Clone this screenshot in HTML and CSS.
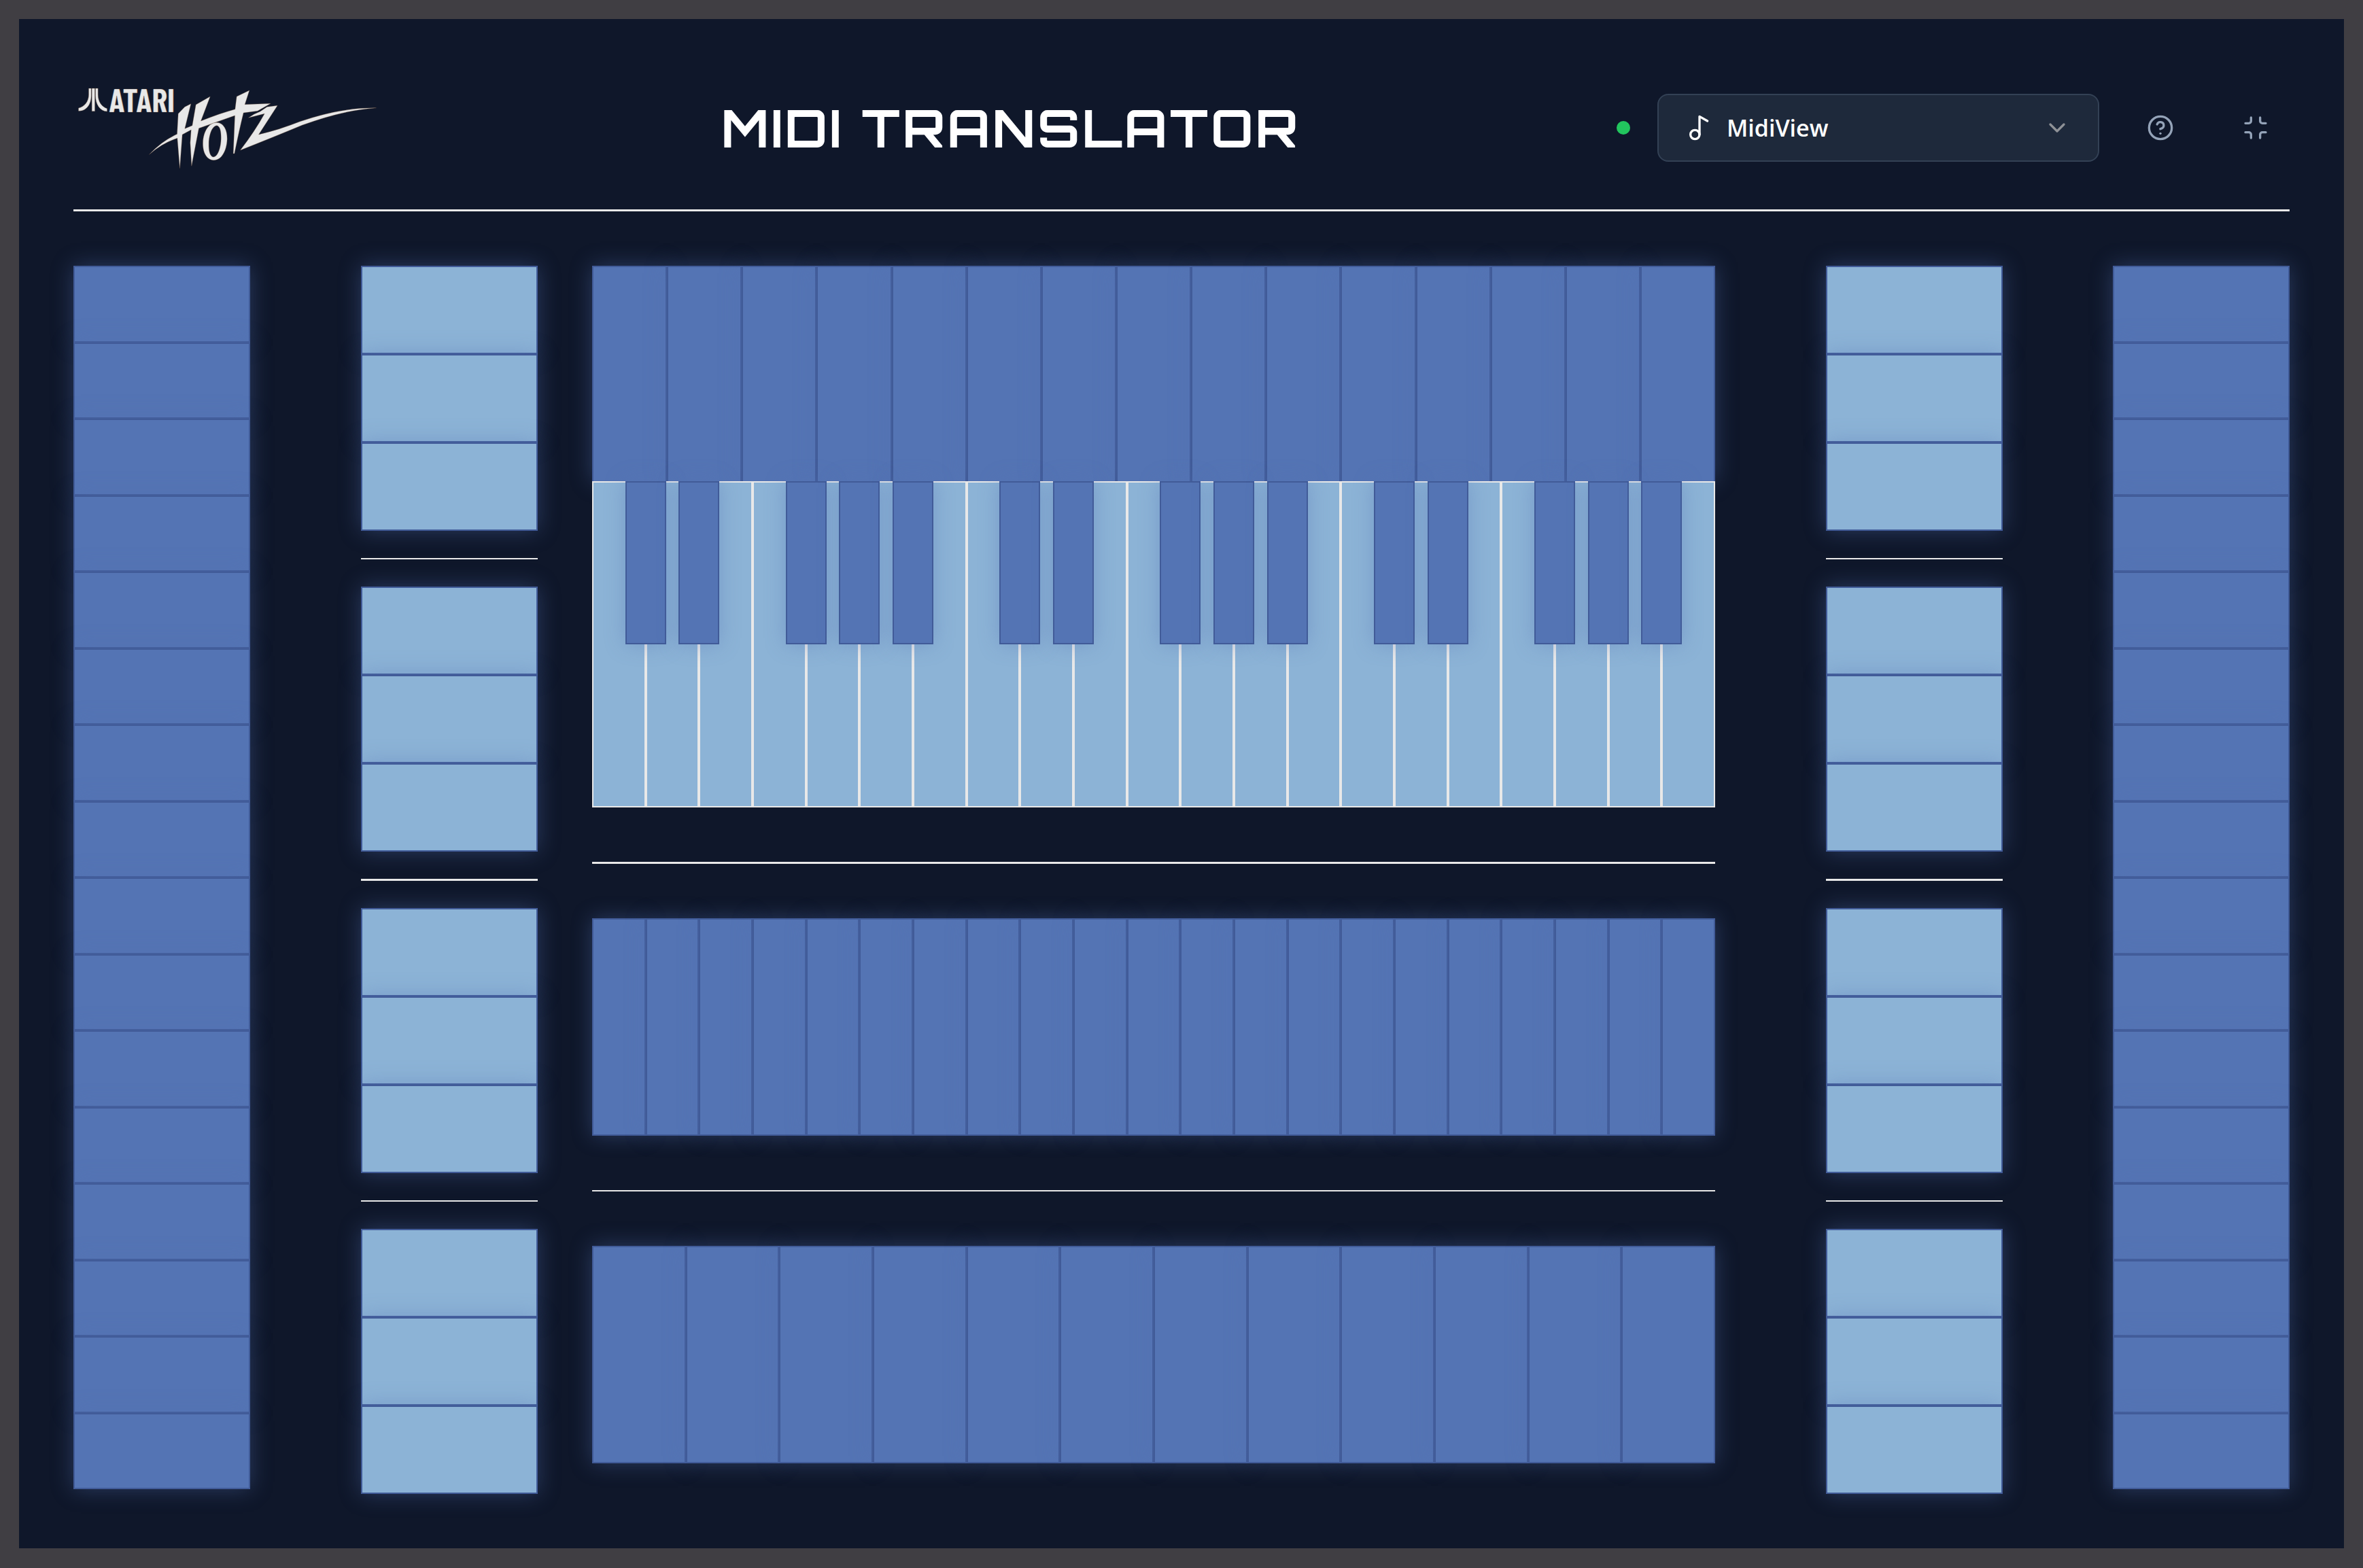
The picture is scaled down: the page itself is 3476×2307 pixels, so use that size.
FILE: index.html
```html
<!DOCTYPE html>
<html lang="en">
<head>
<meta charset="utf-8">
<meta name="viewport" content="width=device-width, initial-scale=1">
<title>MIDI Translator</title>
<link rel="stylesheet" href="styles.css">
</head>
<body>
<main class="panel">
  <header class="header">
    <svg class="logo" viewBox="54 -6 1455 480" role="img" aria-label="Atari Hotz">
      <g class="logo-ink">
        <path d="M131 60H144V161H131Z"/>
        <path d="M117 60H128V92C128 130 108 160 72 160V147C98 142 117 118 117 88Z"/>
        <path d="M158 60H147V92C147 130 166 160 198 162V149C174 142 158 118 158 88Z"/>
        <text class="logo-text" x="206" y="166">ATARI</text>
        <path d="M568 128L541 142L512 172L507 262Q440 292 384 352Q440 302 508 280L519 413L530 264L569 243L565 300L571 403L577 370L603 236L762 180L755 348H760Q782 240 800 168L862 160L920 127L806 131L826 69L770 96L763 152Q690 172 612 204L653 96L590 132L574 224L541 238Z"/>
        <path d="M822 190Q846 172 874 162L904 142L950 136L867 264Q960 242 1050 206Q1230 144 1386 146Q1240 156 1060 222Q930 276 786 333Q850 250 893 172Z"/>
        <path fill-rule="evenodd" d="M682 211C712 212 729 244 728 284C726 335 703 378 668 377C636 376 619 340 621 297C624 248 648 211 682 211ZM682 224C662 226 648 262 647 304C646 338 653 362 667 363C687 362 701 320 701 278C701 248 696 226 682 224Z"/>
      </g>
    </svg>

    <h1 class="title">MIDI TRANSLATOR</h1>

    <div class="controls">
      <span class="status" role="status" aria-label="Connected"></span>
      <div class="picker">
        <svg class="icon picker-note" viewBox="0 0 24 24" aria-hidden="true"><circle cx="8" cy="18" r="4"/><path d="M12 18V2l7 4"/></svg>
        <select class="picker-select" aria-label="MIDI output"><option>MidiView</option></select>
        <svg class="icon picker-arrow" viewBox="0 0 24 24" aria-hidden="true"><path d="m6 9 6 6 6-6"/></svg>
      </div>
      <button class="icon-button" type="button" aria-label="Help">
        <svg class="icon" viewBox="0 0 24 24" aria-hidden="true"><circle cx="12" cy="12" r="10"/><path d="M9.09 9a3 3 0 0 1 5.83 1c0 2-3 3-3 3"/><path d="M12 17h.01"/></svg>
      </button>
      <button class="icon-button" type="button" aria-label="Exit full screen">
        <svg class="icon" viewBox="0 0 24 24" aria-hidden="true"><path d="M8 3v3a2 2 0 0 1-2 2H3"/><path d="M21 8h-3a2 2 0 0 1-2-2V3"/><path d="M3 16h3a2 2 0 0 1 2 2v3"/><path d="M16 21v-3a2 2 0 0 1 2-2h3"/></svg>
      </button>
    </div>
  </header>

  <section class="board">
    <div class="strip" data-keys="16" data-name="Left strip"></div>

    <div class="center">
      <div class="pads">
        <div class="pad-group" data-keys="3" data-name="Left pads 1"></div>
        <div class="rule rule-thin"></div>
        <div class="pad-group" data-keys="3" data-name="Left pads 2"></div>
        <div class="rule"></div>
        <div class="pad-group" data-keys="3" data-name="Left pads 3"></div>
        <div class="rule rule-thin"></div>
        <div class="pad-group" data-keys="3" data-name="Left pads 4"></div>
      </div>
      <div class="keyboards">
        <div class="keyboard">
          <div class="row row-top" data-keys="15" data-name="Top row"></div>
          <div class="piano"></div>
        </div>
        <div class="rule"></div>
        <div class="row" data-keys="21" data-name="Middle row"></div>
        <div class="rule rule-thin"></div>
        <div class="row" data-keys="12" data-name="Bottom row"></div>
      </div>
    </div>

    <div class="side">
      <div class="pads">
        <div class="pad-group" data-keys="3" data-name="Right pads 1"></div>
        <div class="rule rule-thin"></div>
        <div class="pad-group" data-keys="3" data-name="Right pads 2"></div>
        <div class="rule"></div>
        <div class="pad-group" data-keys="3" data-name="Right pads 3"></div>
        <div class="rule rule-thin"></div>
        <div class="pad-group" data-keys="3" data-name="Right pads 4"></div>
      </div>
      <div class="strip" data-keys="16" data-name="Right strip"></div>
    </div>
  </section>
</main>
<script src="script.js"></script>
</body>
</html>
```
FILE: styles.css
```css
:root {
  --frame: #403e43;
  --panel: #0f172a;
  --line: #e8e8e8;
  --key: #5474b4;
  --key-edge: #415b98;
  --pad: #8cb3d6;
  --muted: #94a3b8;
  --glow: 0 0 30px rgba(84, 116, 180, 0.4);
}

* {
  box-sizing: border-box;
}

body {
  margin: 0;
  min-height: 100vh;
  display: flex;
  padding: 28px 28px 29px;
  background: var(--frame);
  color: #fff;
  font-family: "Segoe UI", "Open Sans", "Noto Sans", sans-serif;
}

button {
  margin: 0;
  padding: 0;
  cursor: pointer;
}

.panel {
  flex: 1;
  display: flex;
  flex-direction: column;
  gap: 80px;
  padding: 80px;
  background: var(--panel);
}

/* Header */

.header {
  display: flex;
  align-items: center;
  justify-content: space-between;
  padding-bottom: 40px;
  border-bottom: 3px solid var(--line);
}

.logo {
  width: 488px;
  height: 160px;
}

.logo-ink {
  fill: #e8e8e8;
  stroke: #7a5a40;
  stroke-opacity: 0.5;
  stroke-width: 2;
}

.logo-text {
  font: bold 144px "Barlow Condensed", "Oswald", "Liberation Sans", sans-serif;
}

.title {
  margin: 0;
  font: bold 75px/100px Orbitron, "DejaVu Sans", sans-serif;
  letter-spacing: 0.05em;
  white-space: nowrap;
}

.controls {
  display: flex;
  align-items: center;
  gap: 40px;
}

.status {
  width: 20px;
  height: 20px;
  border-radius: 50%;
  background: #22c55e;
}

.icon {
  width: 40px;
  height: 40px;
  fill: none;
  stroke: currentColor;
  stroke-width: 2;
  stroke-linecap: round;
  stroke-linejoin: round;
}

.picker {
  position: relative;
  width: 650px;
}

.picker-select {
  display: block;
  width: 100%;
  height: 100px;
  padding: 0 100px;
  appearance: none;
  border: 2px solid #334155;
  border-radius: 16px;
  background: #1e293b;
  color: #fff;
  font: 600 34px "Segoe UI", "Open Sans", "Noto Sans", sans-serif;
}

.picker-note,
.picker-arrow {
  position: absolute;
  top: 30px;
  pointer-events: none;
}

.picker-note {
  left: 42px;
}

.picker-arrow {
  right: 42px;
  color: #8e9196;
}

.icon-button {
  display: grid;
  place-items: center;
  width: 100px;
  height: 100px;
  border: 0;
  background: none;
  color: var(--muted);
}

/* Playing surface */

.board {
  flex: 1;
  display: flex;
  gap: 163px;
}

.center {
  flex: 1;
  display: flex;
  gap: 80px;
}

.side {
  display: flex;
  gap: 162px;
}

.key {
  flex: 1;
  border: 2px solid var(--key-edge);
  background: var(--key);
  box-shadow: var(--glow);
}

.strip {
  display: flex;
  flex-direction: column;
  width: 260px;
  height: 1800px;
}

.pads {
  display: flex;
  flex-direction: column;
  justify-content: space-between;
  width: 260px;
}

.pad-group {
  display: flex;
  flex-direction: column;
}

.pad-group .key {
  flex: none;
  height: 130px;
  background: var(--pad);
}

.rule {
  height: 3px;
  background: var(--line);
}

.rule-thin {
  height: 2px;
}

.keyboards {
  flex: 1;
  display: flex;
  flex-direction: column;
  gap: 80px;
}

.row {
  display: flex;
  height: 320px;
}

.row-top {
  height: 317px;
}

.row-top .key {
  border-bottom: 0;
}

.piano {
  position: relative;
  display: flex;
  height: 480px;
  background: var(--panel);
}

.slot {
  position: relative;
  flex: 1;
  display: flex;
}

.key-white {
  border-color: var(--line);
  background: var(--pad);
  box-shadow: none;
}

.key-black {
  position: absolute;
  z-index: 1;
  top: 0;
  right: -30px;
  width: 60px;
  height: 240px;
}
```
FILE: script.js
```js
const makeKey = (className, label) => {
  const key = document.createElement("button");
  key.type = "button";
  key.className = className;
  key.setAttribute("aria-label", label);
  return key;
};

document.querySelectorAll("[data-keys]").forEach((group) => {
  const count = Number(group.dataset.keys);
  for (let i = 1; i <= count; i++) {
    group.append(makeKey("key", `${group.dataset.name}, key ${i}`));
  }
});

// Three octaves of white keys; a black key follows each degree except E and B.
const piano = document.querySelector(".piano");
const notes = ["C", "D", "E", "F", "G", "A", "B"];
for (let octave = 1; octave <= 3; octave++) {
  for (const note of notes) {
    const slot = document.createElement("div");
    slot.className = "slot";
    slot.append(makeKey("key key-white", `${note}${octave}`));
    if (note !== "E" && note !== "B") {
      slot.append(makeKey("key key-black", `${note} sharp ${octave}`));
    }
    piano.append(slot);
  }
}
```
